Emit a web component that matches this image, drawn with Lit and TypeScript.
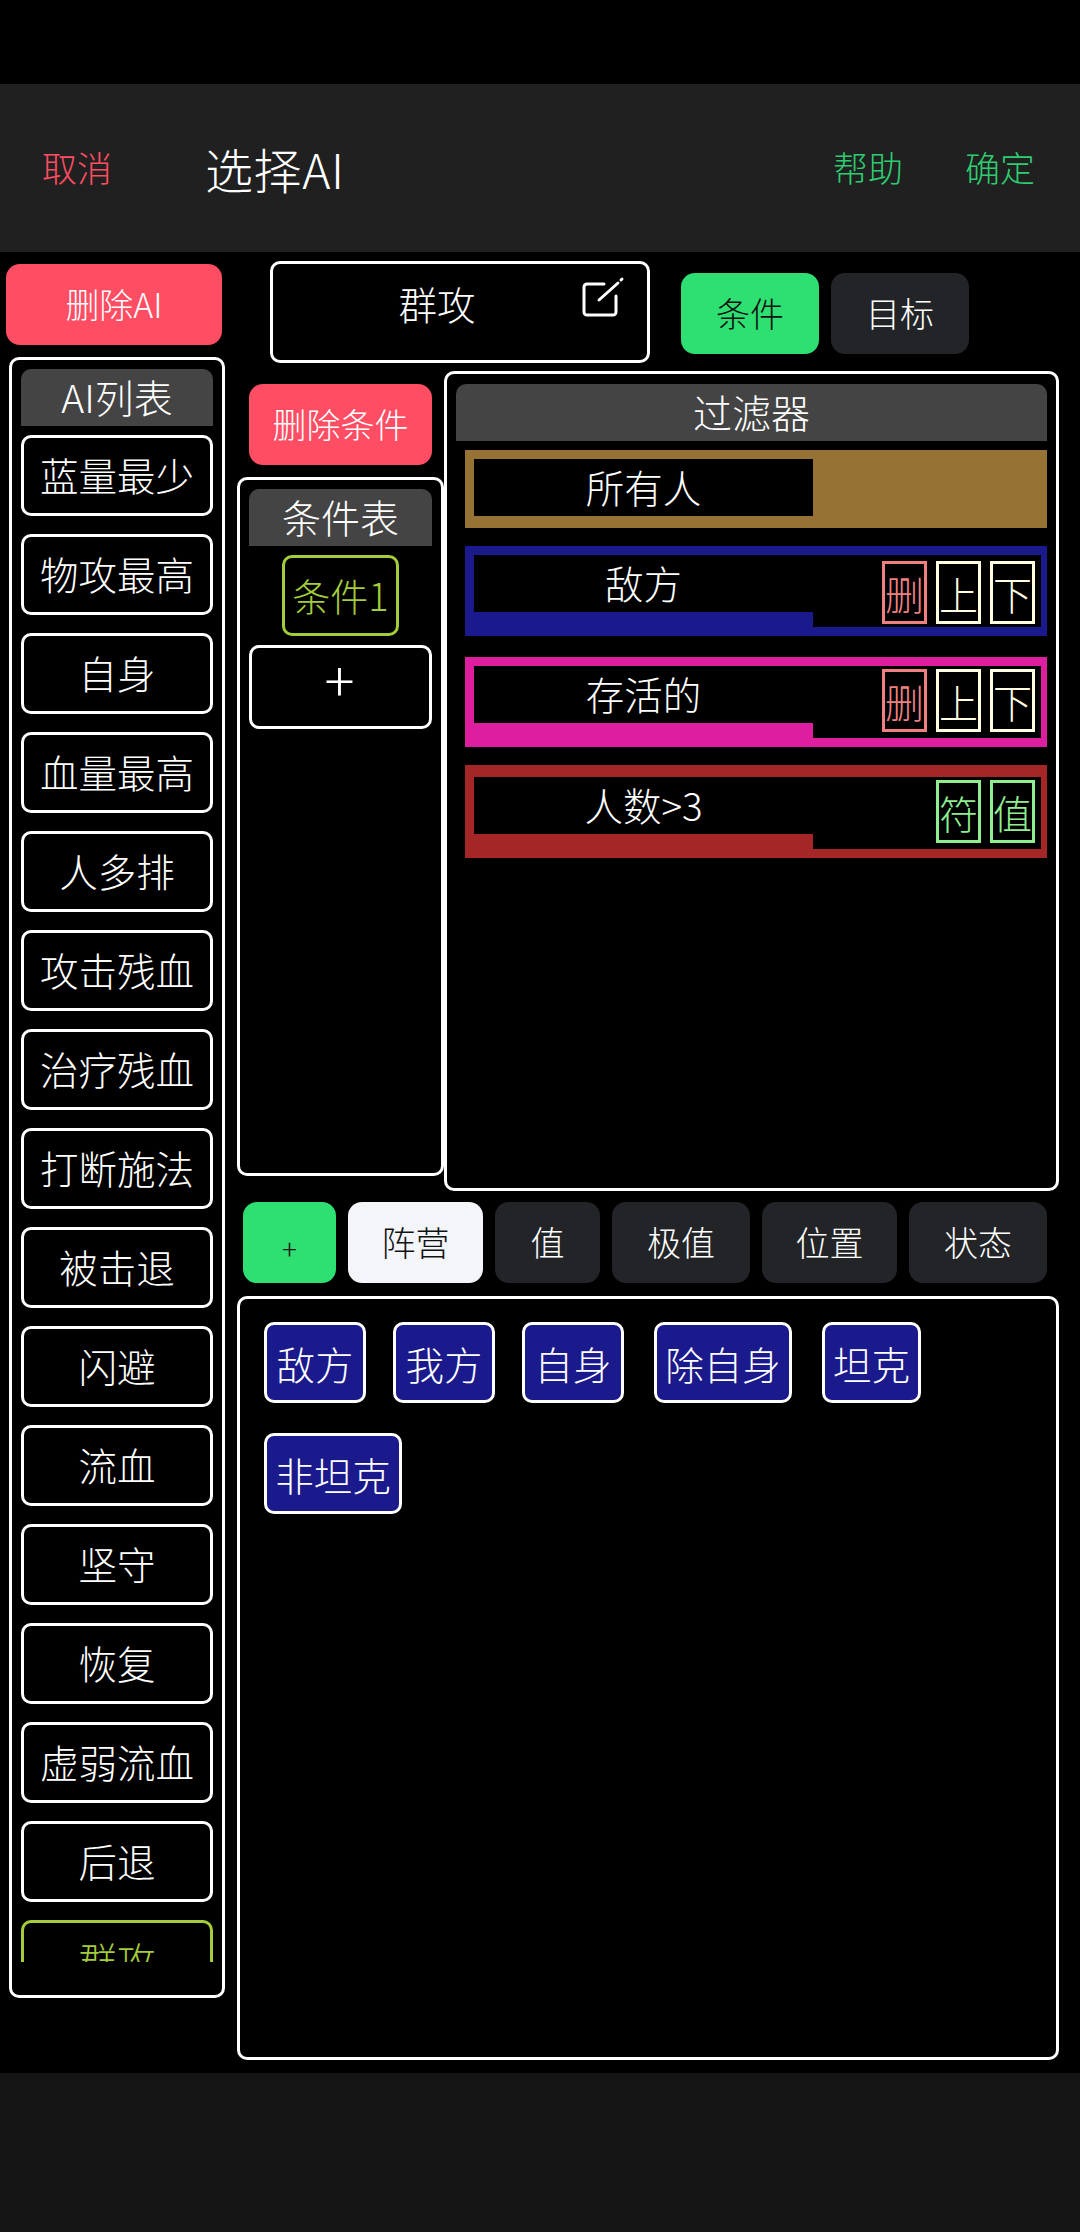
import { LitElement, html, css } from "lit";
import { customElement } from "lit/decorators.js";

const AI_LIST = ["蓝量最少","物攻最高","自身","血量最高","人多排","攻击残血","治疗残血","打断施法","被击退","闪避","流血","坚守","恢复","虚弱流血","后退"];
const CHIPS = [
  { t: "敌方", w: 102, m: 27 },
  { t: "我方", w: 102, m: 27 },
  { t: "自身", w: 102, m: 30 },
  { t: "除自身", w: 138, m: 30 },
  { t: "坦克", w: 99, m: 0 },
  { t: "非坦克", w: 138, m: 0 },
];

@customElement("app-root")
export class AppRoot extends LitElement {
  static styles = css`
    :host { display: block; width: 1080px; height: 2232px; background: #000; color: #fff; overflow: hidden;
      font-family: "Noto Sans CJK SC", "Noto Sans", sans-serif; font-weight: 300; }
    * { box-sizing: border-box; }
    .page { display: flex; flex-direction: column; height: 100%; }
    .status { height: 84px; background: #000; flex: none; }
    .nav { height: 168px; flex: none; background: #202020; display: flex; align-items: center; padding: 0 45px 0 42px; }
    .nav-link { font-size: 35px; line-height: 40px; margin-top: -2px; }
    .red { color: #ff4d63; }
    .green { color: #2ecc71; }
    .title { font-size: 48px; line-height: 56px; margin-left: 93px; flex: 1; letter-spacing: 0.6px; }
    .ok { margin-left: 62px; }
    .main { flex: 1; display: flex; min-height: 0; }
    .footer { height: 159px; flex: none; background: #141414; }
    .left { width: 224px; flex: none; padding-top: 12px; }
    .btn { height: 81px; border-radius: 14px; display: flex; align-items: center; justify-content: center; font-size: 34px; line-height: 40px; padding-bottom: 2px; }
    .danger { background: #ff4d63; color: #fff; }
    .primary { background: #2ee072; color: #111; }
    .dark { background: #232428; color: #fff; }
    .light { background: #f4f5f9; color: #111; }
    .del-ai { width: 216px; margin-left: 6px; }
    .panel { border: 3px solid #fff; border-radius: 10px; }
    .ai-panel { width: 216px; height: 1641px; margin: 12px 0 0 9px; padding: 9px 9px 0; }
    .head { height: 57px; background: #444; border-radius: 10px 10px 0 0; text-align: center; font-size: 39px; line-height: 55px; flex: none; }
    .scroll { height: 1536px; overflow: hidden; padding-top: 9px; display: flex; flex-direction: column; gap: 18px; }
    .item { height: 81px; flex: none; border: 3px solid #fff; border-radius: 10px; display: flex; align-items: center; justify-content: center; font-size: 38.5px; line-height: 50px; padding-bottom: 3px; }
    .item.sel { border-color: #a4cd39; color: #a4cd39; }
    .right { flex: none; width: 822px; margin-left: 13px; }
    .top { display: flex; align-items: flex-start; padding-top: 9px; height: 110px; }
    .name { position: relative; width: 380px; height: 102px; margin-left: 33px; border: 3px solid #fff; border-radius: 10px; text-align: center; font-size: 38.5px; line-height: 50px; padding-top: 14px; padding-right: 46px; }
    .edit { position: absolute; left: 309px; top: 12px; width: 44px; height: 44px; }
    .mode { display: flex; gap: 12px; margin: 12px 0 0 31px; }
    .mode .btn { width: 138px; }
    .mid { display: flex; margin-top: 9px; }
    .cond-col { width: 207px; flex: none; padding-top: 13px; }
    .del-cond { width: 183px; margin-left: 12px; }
    .cond-panel { height: 699px; margin-top: 12px; padding: 9px 9px 0; display: flex; flex-direction: column; }
    .cond-item { height: 81px; width: 117px; align-self: center; margin-top: 9px; border: 3px solid #a4cd39; border-radius: 10px; color: #a4cd39; font-size: 38px; line-height: 50px; padding-bottom: 2px; display: flex; align-items: center; justify-content: center; white-space: nowrap; }
    .add { height: 84px; margin-top: 9px; border: 3px solid #fff; border-radius: 10px; text-align: center; font-size: 56px; line-height: 60px; padding-right: 2px; }
    .filter { width: 615px; height: 820px; padding: 10px 9px 0 9px; }
    .rows { display: flex; flex-direction: column; padding-left: 9px; }
    .row { display: flex; align-items: flex-start; padding: 9px 6px 9px 9px; }
    .lab { width: 339px; height: 57px; background: #000; text-align: center; font-size: 38.5px; line-height: 50px; padding-top: 2px; flex: none; }
    .side { flex: 1; height: 72px; background: #000; display: flex; justify-content: flex-end; gap: 9px; padding: 3px 6px 0 0; }
    .sq { width: 45px; height: 63px; border: 3px solid #fffde0; color: #fffde0; font-size: 39px; line-height: 50px; display: flex; align-items: center; justify-content: center; overflow: hidden; }
    .sq.del { border-color: #f08080; color: #f08080; }
    .sq.ok2 { border-color: #90ee90; color: #90ee90; }
    .brown { background: #967235; height: 78px; margin-top: 9px; }
    .navy { background: #1a1a8c; height: 90px; margin-top: 18px; }
    .navy .side { padding-top: 6px; }
    .pink { background: #dd1f9f; height: 90px; margin-top: 21px; }
    .crimson { background: #a52626; height: 93px; margin-top: 18px; padding-top: 12px; }
    .tabs { display: grid; grid-template-columns: 93px 135px 105px 138px 135px 138px; gap: 12px; margin: 11px 0 0 6px; }
    .plus { font-size: 28px; padding: 10px 0 0; }
    .cat { height: 764px; margin-top: 13px; padding: 23px 24px 0; display: flex; flex-wrap: wrap; align-content: flex-start; row-gap: 30px; }
    .chip { height: 81px; background: #1a1a8c; border: 3px solid #fff; border-radius: 10px; display: flex; align-items: center; justify-content: center; font-size: 38.5px; line-height: 50px; white-space: nowrap; }
  `;

  private squares(kind: "edit" | "value") {
    return kind === "edit"
      ? html`<div class="sq del">删</div><div class="sq">上</div><div class="sq">下</div>`
      : html`<div class="sq ok2">符</div><div class="sq ok2">值</div>`;
  }

  render() {
    return html`
      <div class="page">
        <div class="status"></div>
        <div class="nav">
          <div class="nav-link red">取消</div>
          <div class="title">选择AI</div>
          <div class="nav-link green">帮助</div>
          <div class="nav-link green ok">确定</div>
        </div>
        <div class="main">
          <div class="left">
            <div class="btn danger del-ai">删除AI</div>
            <div class="panel ai-panel">
              <div class="head">AI列表</div>
              <div class="scroll">
                ${AI_LIST.map((t) => html`<div class="item">${t}</div>`)}
                <div class="item sel">群攻</div>
              </div>
            </div>
          </div>
          <div class="right">
            <div class="top">
              <div class="name">群攻
                <svg class="edit" viewBox="0 0 44 44" fill="none" stroke="#fff" stroke-width="3" stroke-linecap="round" stroke-linejoin="round">
                  <path d="M22 8H5a3 3 0 0 0-3 3v25a3 3 0 0 0 3 3h26a3 3 0 0 0 3-3V20"/>
                  <path d="M17 24 L36 7"/><path d="M39 4 L40 3"/>
                </svg>
              </div>
              <div class="mode">
                <div class="btn primary">条件</div>
                <div class="btn dark">目标</div>
              </div>
            </div>
            <div class="mid">
              <div class="cond-col">
                <div class="btn danger del-cond">删除条件</div>
                <div class="panel cond-panel">
                  <div class="head">条件表</div>
                  <div class="cond-item">条件1</div>
                  <div class="add">+</div>
                </div>
              </div>
              <div class="panel filter">
                <div class="head">过滤器</div>
                <div class="rows">
                  <div class="row brown"><div class="lab">所有人</div></div>
                  <div class="row navy"><div class="lab">敌方</div><div class="side">${this.squares("edit")}</div></div>
                  <div class="row pink"><div class="lab">存活的</div><div class="side">${this.squares("edit")}</div></div>
                  <div class="row crimson"><div class="lab">人数&gt;3</div><div class="side">${this.squares("value")}</div></div>
                </div>
              </div>
            </div>
            <div class="tabs">
              <div class="btn primary plus">+</div>
              <div class="btn light">阵营</div>
              <div class="btn dark">值</div>
              <div class="btn dark">极值</div>
              <div class="btn dark">位置</div>
              <div class="btn dark">状态</div>
            </div>
            <div class="panel cat">
              ${CHIPS.map((c) => html`<div class="chip" style="width:${c.w}px;margin-right:${c.m}px">${c.t}</div>`)}
            </div>
          </div>
        </div>
        <div class="footer"></div>
      </div>
    `;
  }
}
